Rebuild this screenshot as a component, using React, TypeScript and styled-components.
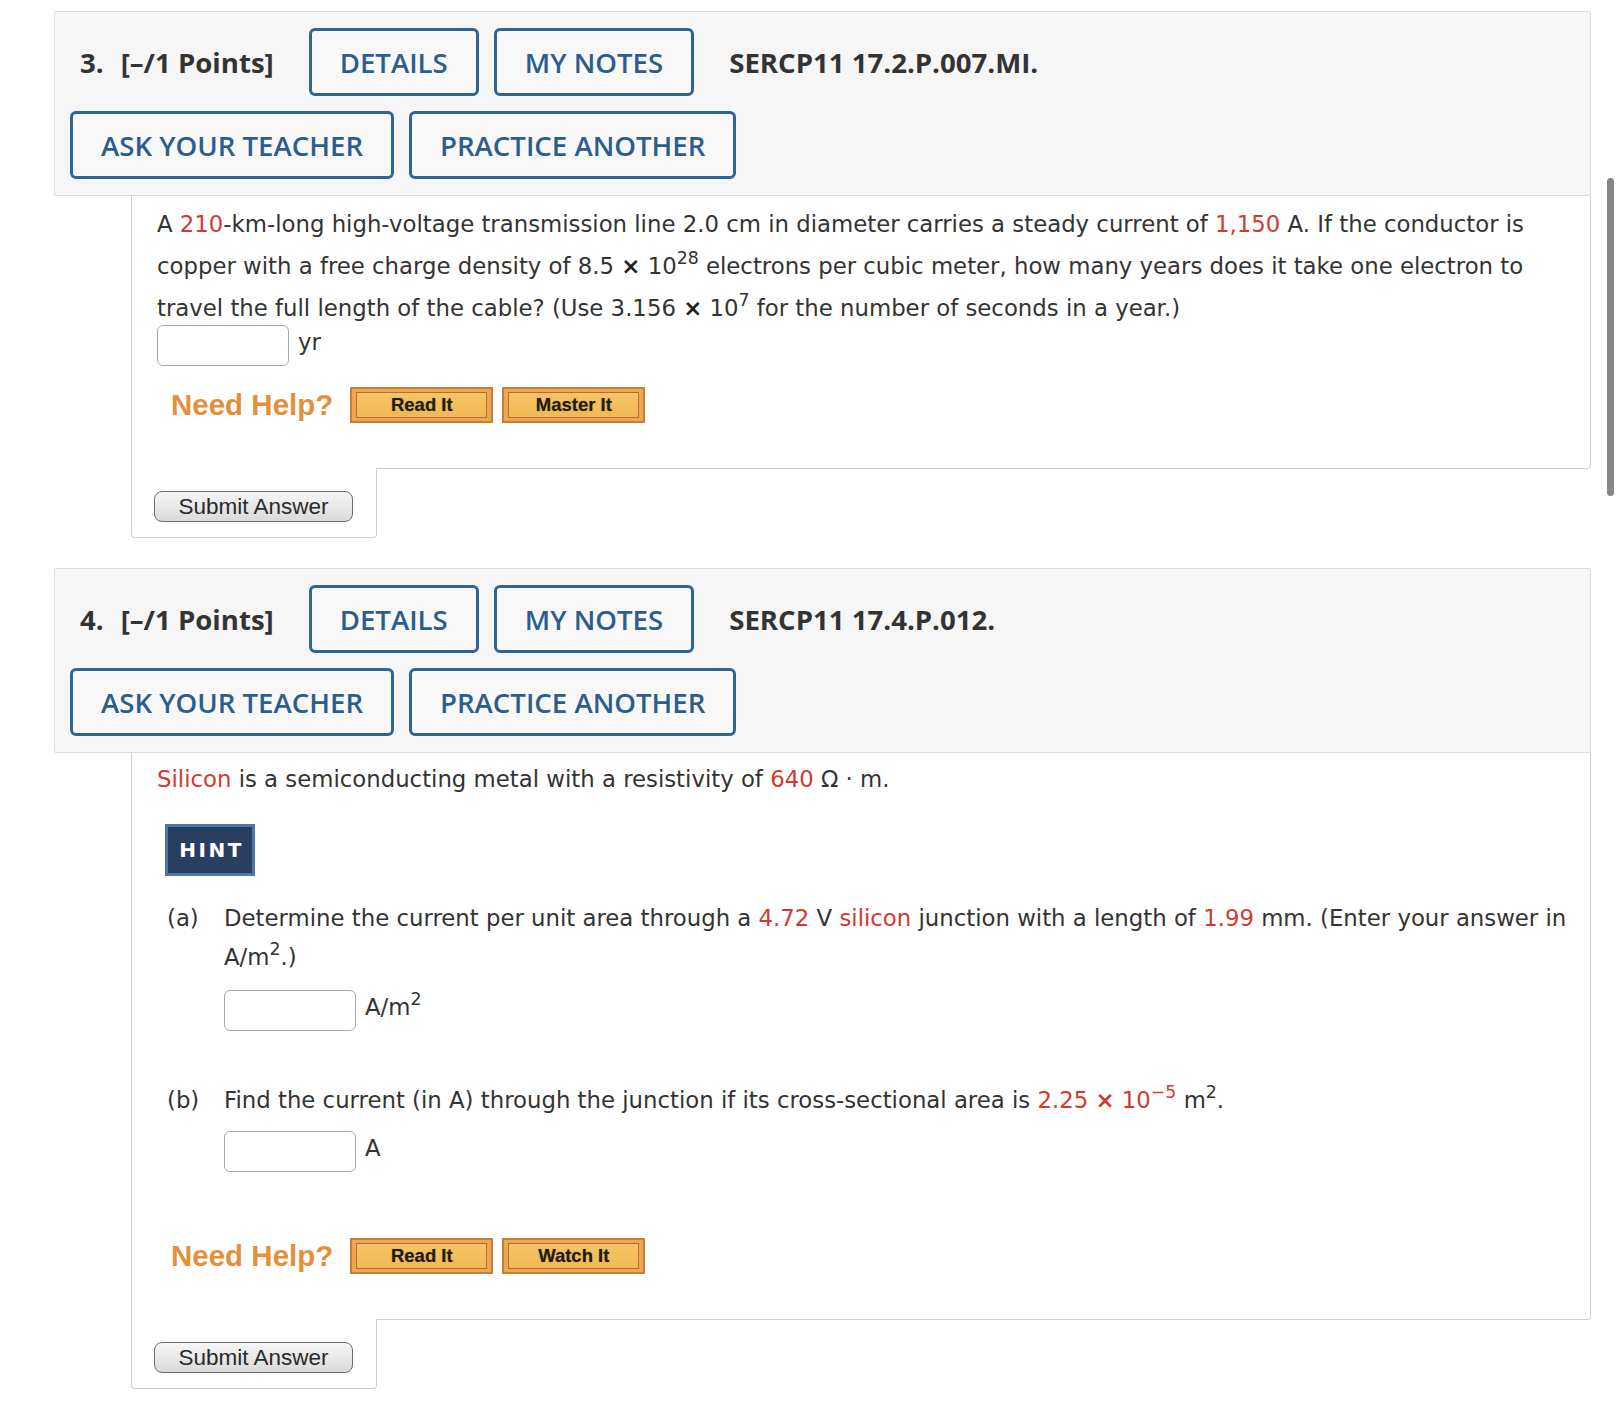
import React from 'react';
import styled, { createGlobalStyle } from 'styled-components';

const GlobalStyle = createGlobalStyle`
  html, body {
    margin: 0;
    padding: 0;
    background: #fff;
  }
  body {
    font-family: 'DejaVu Sans', Verdana, sans-serif;
    color: #333;
  }
`;

const Page = styled.div`
  width: 1537px;
  padding: 11px 0 40px 54px;
`;

const Question = styled.section`
  & + & {
    margin-top: 30px;
  }
`;

const Header = styled.div`
  background: #f6f6f6;
  border: 1px solid #dcdcdc;
  border-radius: 2px;
  padding: 16px 0 16px 15px;
  display: flex;
  flex-direction: column;
  gap: 15px;
  font-family: 'Open Sans', 'Liberation Sans', sans-serif;
`;

const HeaderRow = styled.div`
  display: flex;
  align-items: center;
  height: 68px;
  gap: 15px;
`;

const QNumber = styled.span`
  margin-left: 10px;
  margin-right: 2px;
  font-size: 27.6px;
  font-weight: 700;
  color: #333;
`;

const Points = styled.span`
  font-size: 27.6px;
  font-weight: 700;
  color: #333;
  margin-right: 20px;
`;

const QRef = styled.span`
  margin-left: 20px;
  font-size: 27.6px;
  font-weight: 700;
  color: #333;
`;

const ActionButton = styled.button`
  box-sizing: border-box;
  height: 68px;
  display: inline-flex;
  align-items: center;
  padding: 0 28px;
  border: 3px solid #2f6493;
  border-radius: 6px;
  background: #f8f8f8;
  color: #2c5d8c;
  font-family: 'Open Sans', 'Liberation Sans', sans-serif;
  font-size: 27.6px;
  font-weight: 600;
  cursor: pointer;
`;

const Body = styled.div`
  margin-left: 77px;
  background: #fff;
  border: 1px solid #d0d0d0;
  border-top: none;
  border-radius: 0 0 4px 0;
  padding: ${(p: { $top: number }) => p.$top}px 14px 45px 25px;
  font-size: 22.8px;
`;

const Prompt = styled.div`
  line-height: 42px;
`;

const Red = styled.span`
  color: #d23a2f;
`;

const Times = styled.span<{ $red?: boolean }>`
  font-weight: 700;
  color: ${(p) => (p.$red ? '#d23a2f' : '#222')};
`;

const Sup = styled.sup`
  font-size: 0.76em;
  line-height: 0;
  vertical-align: 0.6em;
`;

const AnswerRow = styled.div`
  display: flex;
  align-items: flex-start;
  gap: 9px;
  margin-top: ${(p: { $gap: number }) => p.$gap}px;
`;

const AnswerInput = styled.input`
  box-sizing: border-box;
  width: 132px;
  height: 41px;
  border: 1px solid #a8a8a8;
  border-radius: 6px;
  background: #fff;
  outline: none;
`;

const Unit = styled.span`
  line-height: 34px;
`;

const HelpRow = styled.div`
  display: flex;
  align-items: center;
  gap: 9px;
  margin-top: ${(p: { $gap: number }) => p.$gap}px;
  margin-left: 14px;
`;

const NeedHelp = styled.span`
  font-family: 'Liberation Sans', Arial, sans-serif;
  font-size: 29.5px;
  font-weight: 700;
  color: #e48f3a;
  margin-right: 8px;
`;

const HelpButton = styled.button`
  box-sizing: border-box;
  width: 143px;
  height: 36px;
  padding: 3px 4px;
  display: flex;
  border: 2px solid #c47f3c;
  background: #efa64e;
  cursor: pointer;

  span {
    flex: 1;
    display: flex;
    align-items: center;
    justify-content: center;
    border: 1px solid #b27035;
    background: linear-gradient(#f6c466, #f1b954);
    font-family: 'Liberation Sans', Arial, sans-serif;
    font-size: 18.5px;
    font-weight: 700;
    color: #231c12;
    text-shadow: 0 0 1px rgba(60, 40, 10, 0.5);
  }
`;

const SubmitBox = styled.div`
  box-sizing: border-box;
  width: 246px;
  margin-left: 77px;
  margin-top: -1px;
  padding: 23px 0 15px 22px;
  background: #fff;
  border: 1px solid #d0d0d0;
  border-top: none;
  border-radius: 0 0 4px 4px;
`;

const SubmitButton = styled.button`
  box-sizing: border-box;
  width: 199px;
  height: 31px;
  padding: 0;
  border: 1.5px solid #6e6e6e;
  border-radius: 8px;
  background: linear-gradient(#f6f6f6, #dadada);
  font-family: 'Liberation Sans', Arial, sans-serif;
  font-size: 22.5px;
  line-height: 28px;
  color: #2a2a2a;
  cursor: pointer;
`;

const Intro = styled.div`
  line-height: 38px;
`;

const Hint = styled.div`
  box-sizing: border-box;
  width: 90px;
  height: 52px;
  margin: 26px 0 0 8px;
  display: flex;
  align-items: center;
  justify-content: center;
  background: #283f5f;
  border: 3px solid #4d76a3;
  color: #fff;
  font-family: 'DejaVu Sans', Verdana, sans-serif;
  font-size: 20px;
  font-weight: 700;
  letter-spacing: 2.5px;
  padding-left: 3px;
`;

const Part = styled.div`
  display: flex;
  margin: ${(p: { $gap: number }) => p.$gap}px 0 0 10px;
`;

const PartLabel = styled.span`
  flex: 0 0 57px;
  line-height: 39px;
`;

const PartBody = styled.div`
  flex: 1;
  line-height: 39px;
`;

const Scrollbar = styled.div`
  position: fixed;
  top: 178px;
  left: 1607px;
  width: 7px;
  height: 318px;
  border-radius: 4px;
  background: #878787;
`;

type HeadProps = { num: number; code: string };

const QuestionHeader = ({ num, code }: HeadProps) => (
  <Header>
    <HeaderRow>
      <QNumber>{num}.</QNumber>
      <Points>[–/1 Points]</Points>
      <ActionButton>DETAILS</ActionButton>
      <ActionButton>MY NOTES</ActionButton>
      <QRef>{code}</QRef>
    </HeaderRow>
    <HeaderRow>
      <ActionButton>ASK YOUR TEACHER</ActionButton>
      <ActionButton>PRACTICE ANOTHER</ActionButton>
    </HeaderRow>
  </Header>
);

const Submit = () => (
  <SubmitBox>
    <SubmitButton>Submit Answer</SubmitButton>
  </SubmitBox>
);

export default function App() {
  return (
    <Page>
      <GlobalStyle />
      <Question>
        <QuestionHeader num={3} code="SERCP11 17.2.P.007.MI." />
        <Body $top={7}>
          <Prompt>
            A <Red>210</Red>-km-long high-voltage transmission line 2.0 cm in diameter carries a
            steady current of <Red>1,150</Red> A. If the conductor is copper with a free charge
            density of 8.5 <Times>×</Times> 10<Sup>28</Sup> electrons per cubic meter, how many
            years does it take one electron to travel the full length of the cable? (Use 3.156{' '}
            <Times>×</Times> 10<Sup>7</Sup> for the number of seconds in a year.)
          </Prompt>
          <AnswerRow $gap={-4}>
            <AnswerInput />
            <Unit>yr</Unit>
          </AnswerRow>
          <HelpRow $gap={21}>
            <NeedHelp>Need Help?</NeedHelp>
            <HelpButton><span>Read It</span></HelpButton>
            <HelpButton><span>Master It</span></HelpButton>
          </HelpRow>
        </Body>
        <Submit />
      </Question>

      <Question>
        <QuestionHeader num={4} code="SERCP11 17.4.P.012." />
        <Body $top={7}>
          <Intro>
            <Red>Silicon</Red> is a semiconducting metal with a resistivity of <Red>640</Red> Ω · m.
          </Intro>
          <Hint>HINT</Hint>
          <Part $gap={23}>
            <PartLabel>(a)</PartLabel>
            <PartBody>
              Determine the current per unit area through a <Red>4.72</Red> V <Red>silicon</Red>{' '}
              junction with a length of <Red>1.99</Red> mm. (Enter your answer in A/m<Sup>2</Sup>.)
              <AnswerRow $gap={13}>
                <AnswerInput />
                <Unit>
                  A/m<Sup>2</Sup>
                </Unit>
              </AnswerRow>
            </PartBody>
          </Part>
          <Part $gap={50}>
            <PartLabel>(b)</PartLabel>
            <PartBody>
              Find the current (in A) through the junction if its cross-sectional area is{' '}
              <Red>
                2.25 <Times $red>×</Times> 10<Sup>−5</Sup>
              </Red>{' '}
              m<Sup>2</Sup>.
              <AnswerRow $gap={11}>
                <AnswerInput />
                <Unit>A</Unit>
              </AnswerRow>
            </PartBody>
          </Part>
          <HelpRow $gap={66}>
            <NeedHelp>Need Help?</NeedHelp>
            <HelpButton><span>Read It</span></HelpButton>
            <HelpButton><span>Watch It</span></HelpButton>
          </HelpRow>
        </Body>
        <Submit />
      </Question>
      <Scrollbar />
    </Page>
  );
}
